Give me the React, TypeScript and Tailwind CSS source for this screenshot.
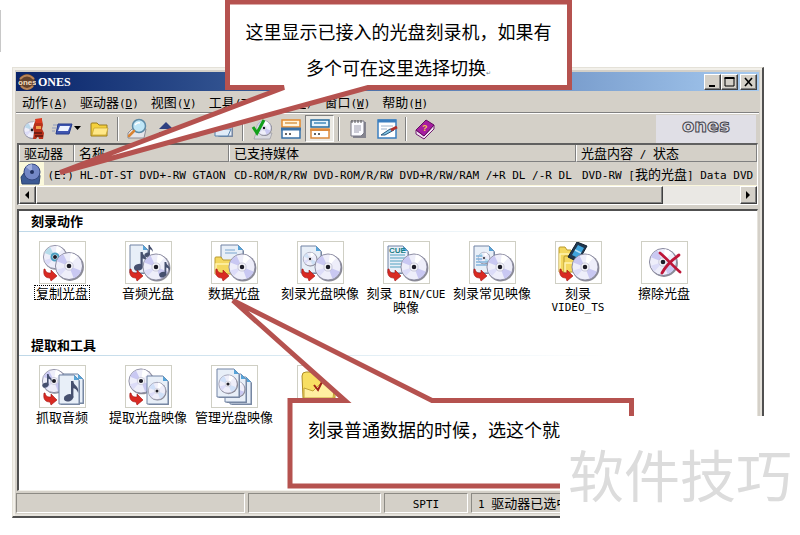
import { Fragment, type ReactNode } from 'react';

const menus = [
  { label: '动作', key: 'A' },
  { label: '驱动器', key: 'D' },
  { label: '视图', key: 'V' },
  { label: '工具', key: 'T' },
  { label: '选项', key: 'O' },
  { label: '窗口', key: 'W' },
  { label: '帮助', key: 'H' },
];

/* Latin runs use the narrow fixed-width face, Chinese runs the normal one */
function Mixed({ text }: { text: string }) {
  return (
    <>
      {text.split(/([\x20-\x7e]+)/).map((part, i) =>
        i % 2 ? (
          <span key={i} className="font-['DejaVu_Sans_Mono','Noto_Sans_CJK_SC',monospace] text-[11px] leading-none whitespace-pre">{part}</span>
        ) : (
          <Fragment key={i}>{part}</Fragment>
        )
      )}
    </>
  );
}

/* ---------- drawing parts ---------- */

function Disc({ x, y, r, tint = '#c9c8f2' }: { x: number; y: number; r: number; tint?: string }) {
  return (
    <g transform={`translate(${x} ${y}) scale(${r / 15})`}>
      <circle cx="1" cy="1" r="15" fill="#8b8b96" />
      <circle r="14.5" fill="#eeeefa" stroke="#83839a" strokeWidth="1" />
      <path d="M0 0L-13-5A14 14 0 0 1-6-12.500z" fill={tint} />
      <path d="M0 0L13 5A14 14 0 0 1 5 13z" fill={tint} />
      <path d="M0 0L-13 4A14 14 0 0 0-9 10z" fill="#dcdcf8" />
      <path d="M0 0L2-14A14 14 0 0 1 9-10z" fill="#fff" />
      <circle r="4.500" fill="#f5f5fb" stroke="#b9b9cc" strokeWidth=".8" />
      <circle r="2.500" fill="#1d1d28" />
    </g>
  );
}

function Page({ x, y, w = 20, h = 27 }: { x: number; y: number; w?: number; h?: number }) {
  return (
    <g transform={`translate(${x} ${y})`}>
      <path d={`M1.500 1.500H${w - 4}L${w + 1} 6V${h + 1}H1.500z`} fill="#7e8ba0" />
      <path d={`M0 0H${w - 5}L${w} 5V${h}H0z`} fill="#e8eff8" stroke="#7183a3" />
      <path d={`M${w - 5} 0V5H${w}z`} fill="#58a4d8" />
    </g>
  );
}

function Note({ x, y, s = 1 }: { x: number; y: number; s?: number }) {
  return (
    <g transform={`translate(${x} ${y}) scale(${s})`} fill="#46506f">
      <ellipse cx="3" cy="14" rx="4" ry="3" transform="rotate(-20 3 14)" />
      <path d="M5 14V0h2c0 4 5 4 4 10-1-3-3-4-4-4v8z" />
    </g>
  );
}

const RedArrow = () => (
  <path d="M5 27c1 4 3 4 6 4v-3l6 6-6 5-1-3c-5 0-7-3-6-9z" fill="#d92a22" stroke="#a11412" strokeWidth=".6" />
);

const Folder = ({ x, y, w = 20, h = 18 }: { x: number; y: number; w?: number; h?: number }) => (
  <g transform={`translate(${x} ${y})`}>
    <path d={`M0 1Q0 0 1 0H6L8 3H${w}V${h}H0z`} fill="#f4d860" stroke="#b99a2d" />
    <path d={`M1 ${h}V7H${w - 1}`} fill="none" stroke="#fff3b0" strokeWidth="1.500" />
  </g>
);

type Action = { name?: string; label: string[]; art: ReactNode };

const burnActions: Action[] = [
  { label: ['复制光盘'], art: <><Disc x={15} y={15} r={12} tint="#b6dcea" /><circle cx="15" cy="15" r="3.500" fill="none" stroke="#4b9fc0" strokeWidth="2" /><RedArrow /><Disc x={29} y={24} r={14} /></> },
  { label: ['音频光盘'], art: <><Page x={4} y={3} w={18} h={28} /><Note x={9} y={10} s={1.1} /><Note x={19} y={3} s={0.7} /><RedArrow /><Disc x={30} y={25} r={13.5} /><Note x={34} y={20} s={0.9} /></> },
  { label: ['数据光盘'], art: <><Page x={9} y={3} w={22} h={20} /><path d="M13 8h10M13 11h12" stroke="#7aa6cf" /><Folder x={3} y={15} w={22} h={17} /><RedArrow /><Disc x={30} y={25} r={13.5} /></> },
  { label: ['刻录光盘映像'], art: <><Page x={3} y={4} /><Disc x={12} y={17} r={7} tint="#cfe1f5" /><RedArrow /><Disc x={30} y={25} r={13.5} /></> },
  { label: ['刻录 BIN/CUE', '映像'], art: <><Page x={4} y={4} /><path d="M6 13h15M6 16h15M6 19h13M6 22h12M6 25h11" stroke="#82bcd2" strokeWidth="1.500" /><text x="5" y="11" fontFamily="Liberation Sans, sans-serif" fontWeight="bold" fontSize="8" fill="#167c83">CUE</text><RedArrow /><Disc x={30} y={25} r={13.5} /></> },
  { label: ['刻录常见映像'], art: <><Page x={4} y={4} /><Disc x={14} y={16} r={6} tint="#b7dff0" /><path d="M6 14h6M6 17h6M6 20h12M6 23h11" stroke="#82b4dc" strokeWidth="1.500" /><RedArrow /><Disc x={30} y={25} r={13.5} /></> },
  { label: ['刻录', 'VIDEO_TS'], art: <><Folder x={3} y={5} w={12} h={25} /><Folder x={8} y={14} w={28} h={16} /><path d="M21 0l10 4-9 16-10-5z" fill="#20374f" stroke="#12202f" /><path d="M22 3l6 3-6 10-6-3z" fill="#3fa4dc" /><path d="M19 8l6 3" stroke="#b9e4fa" strokeWidth="1.500" /><RedArrow /><Disc x={29} y={25} r={13.5} /></> },
  { label: ['擦除光盘'], art: <><Disc x={21} y={20} r={14} /><path d="M18 11c7 6 12 12 20 19M37 13c-7 5-13 10-17 18" fill="none" stroke="#bd1638" strokeWidth="2.800" strokeLinecap="round" /></> },
];

const toolActions: Action[] = [
  { label: ['抓取音频'], art: <><Disc x={14} y={15} r={12} /><Note x={3} y={8} s={0.8} /><RedArrow /><Page x={23} y={8} w={20} h={29} /><Page x={19} y={9} w={20} h={29} /><Note x={25} y={15} s={1.2} /></> },
  { label: ['提取光盘映像'], art: <><Disc x={15} y={15} r={12.5} /><RedArrow /><Page x={21} y={10} w={21} h={28} /><Disc x={31} y={25} r={9} tint="#d0e0f8" /></> },
  { label: ['管理光盘映像'], art: <><Page x={18} y={11} w={21} h={27} /><Page x={13} y={8} w={21} h={28} /><Disc x={25} y={23} r={8} /><Page x={5} y={3} w={22} h={28} /><Disc x={16} y={18} r={9.5} tint="#d0e0f8" /></> },
  { name: '选项', label: [], art: <><path d="M4 10q0-4 4-4h10l5 4h14v22H5z" fill="#f8df63" stroke="#ad8d28" /><path d="M6 32V22l9 3 8-8h14l-2 15z" fill="#fff0a1" stroke="#c2a338" /><path d="M16 19l4 5 6-12" fill="none" stroke="#a02018" strokeWidth="2" /></> },
];

const bar = {
  burner: <><Disc x={9} y={12} r={8.5} tint="#bcd8ea" /><path d="M11 6l2-4h6l1 5-1 4 2 4-1 6h-4l-1-3-2 3h-3l1-7-1-4z" fill="#b8311a" /><path d="M13 8h5v3h-5z" fill="#f0a04e" /><path d="M12 1l1 4h6V0z" fill="#dc3a20" /><path d="M11 15h8M12 18h8" stroke="#5c1710" strokeWidth="1.500" /></>,
  drive: <><path d="M6 6h14l-3 10H4z" fill="#3e55b0" stroke="#263c8c" /><path d="M8 8h10l-2 5H6z" fill="#eef3ff" /><path d="M1 7h4M0 10h4M0 13h3" stroke="#8f9cc0" /></>,
  folder: <><path d="M3 6q0-1 1-1h5l2 2h8v11H3z" fill="#f4d03d" stroke="#9a7d1e" /><path d="M4 17L6 10h14l-2 7z" fill="#ffe888" stroke="#c3a02f" strokeWidth=".7" /></>,
  search: <><path d="M2 15l4-4h14l-2 9H2z" fill="#e5e5ea" stroke="#8c8c96" /><circle cx="13" cy="8" r="6.500" fill="#bfe6f7" stroke="#5c8aa6" strokeWidth="1.500" /><path d="M9 7q2-3 5-2" stroke="#fff" strokeWidth="1.500" fill="none" /><path d="M8 13l-5 5" stroke="#d88434" strokeWidth="2.500" strokeLinecap="round" /></>,
  eject: <><path d="M11 4l7 7H4z" fill="#2d3f80" /><path d="M4 14h14v3H4z" fill="#2d3f80" /></>,
  disc: <Disc x={11} y={11} r={8} />,
  image: <><Page x={5} y={4} w={14} h={14} /><path d="M2 14l4-3h12l-3 7H2z" fill="#dfebf8" stroke="#5781ab" /></>,
  verify: <><path d="M5 15h16l-2 6H3z" fill="#dadae0" stroke="#9a9aa2" strokeWidth=".7" /><Disc x={13} y={10} r={7.5} /><path d="M2 9l4 6 7-13" fill="none" stroke="#12a01a" strokeWidth="3" /></>,
  layoutA: <><path d="M2 2h18v7H2z" fill="#fff4dc" stroke="#e2892e" strokeWidth="1.500" /><path d="M5 5h12" stroke="#e2b070" strokeWidth="2" /><path d="M2 11h18v9H2z" fill="#fff" stroke="#3971a8" strokeWidth="1.500" /><path d="M1 11h20" stroke="#3971a8" strokeWidth="3" /><path d="M5 16h2M9 16h2" stroke="#333" strokeWidth="1.500" /></>,
  layoutB: <><path d="M2 11h18v9H2z" fill="#fff" stroke="#dd8a3d" strokeWidth="1.500" /><path d="M2 2h18v7H2z" fill="#e4f3fc" stroke="#246b9d" strokeWidth="1.500" /><path d="M5 5h12" stroke="#69a4cc" strokeWidth="2" /><path d="M1 12h20" stroke="#dd8a3d" strokeWidth="2" /><path d="M5 16h2M9 16h2" stroke="#333" strokeWidth="1.500" /></>,
  notes: <><path d="M6 4h13v16H6z" fill="#85858f" /><path d="M4 3h13v12l-3 3H4z" fill="#fbfbff" stroke="#777785" /><path d="M5 2v3M8 2v3M11 2v3M14 2v3" stroke="#555" /><path d="M7 8h7M7 10h7M7 12h7M7 14h5" stroke="#9a9aac" /></>,
  edit: <><path d="M2 2h18v18H2z" fill="#fff" stroke="#3b7fc0" strokeWidth="1.500" /><path d="M2 3h18" stroke="#3b7fc0" strokeWidth="3" /><path d="M5 8h12M5 11h6" stroke="#9fb5ce" /><path d="M5 17l9-6 4 1-9 5z" fill="#84c5e6" stroke="#28597e" /><path d="M15 12l6-3" stroke="#b0302c" strokeWidth="3" /></>,
  help: <><path d="M2 12v4l8 5 10-10V7L10 18z" fill="#f2e2f2" stroke="#701c70" /><path d="M2 12L12 2l8 5-10 11z" fill="#a71da0" stroke="#611060" /><text x="8" y="13" fontFamily="Liberation Sans, sans-serif" fontWeight="bold" fontSize="9" fill="#f4c64d">?</text></>,
};

function BarButton({ label, art, pressed, menu }: { label: string; art: ReactNode; pressed?: boolean; menu?: boolean }) {
  return (
    <button
      type="button"
      aria-label={label}
      className={`flex h-[27px] shrink-0 items-center justify-center ${menu ? 'w-9' : 'w-[29px]'} ${pressed ? 'border border-[#808080] border-r-white border-b-white bg-[#ebe9e4]' : ''}`}
    >
      <svg width="22" height="22" viewBox="0 0 22 22">{art}</svg>
      {menu && <svg width="7" height="5" viewBox="0 0 7 5"><path d="M0 0h7L3.500 4z" /></svg>}
    </button>
  );
}

const BarSeparator = () => (
  <div className="flex w-[9px] shrink-0 justify-center">
    <div className="h-6 w-[2px] border-l border-[#808080] bg-white" />
  </div>
);

function ActionGroup({ title, items, focused }: { title: string; items: Action[]; focused?: number }) {
  return (
    <section>
      <h2 className="pl-3 text-[13px] leading-[19px] font-bold">{title}</h2>
      <div className="mt-px h-px w-4/5 bg-gradient-to-r from-[#bfd8e8] via-[#dcebf3] to-transparent" />
      <div className="flex flex-wrap pt-[9px]">
        {items.map((item, i) => (
          <button key={i} type="button" aria-label={item.name} className="flex w-[86px] flex-col items-center">
            <span className="border border-[#cfcfc4] bg-white">
              <svg width="45" height="41" viewBox="0 0 45 41">{item.art}</svg>
            </span>
            {item.label.length > 0 && (
              <span className={`mt-px border border-dotted px-px leading-[13px] whitespace-nowrap ${i === focused ? 'border-black' : 'border-transparent'}`}>
                {item.label.map((line) => (
                  <span key={line} className="block"><Mixed text={line} /></span>
                ))}
              </span>
            )}
          </button>
        ))}
      </div>
    </section>
  );
}

const raised = 'border border-white border-r-[#404040] border-b-[#404040] bg-[#d4d0c8] shadow-[inset_-1px_-1px_0_#808080]';
const th = 'border-r border-b border-l border-[#808080] border-l-white py-0 pr-0 pl-[4px] text-left font-normal';
const td = 'border-b border-[#fbf7dc] py-0 pr-0';

export default function App() {
  return (
    <div className="relative min-h-screen overflow-hidden bg-white pt-[67px] pb-4 pl-3 pr-9 font-['Noto_Sans_CJK_SC',sans-serif] text-[13px] text-black">
      <div className="absolute top-[10px] left-0 h-[42px] w-px bg-[#c8c8c8]" />

      <main className="border border-[#e4e1d8] border-r-2 border-b-2 border-r-[#505050] border-b-[#505050] bg-[#d4d0c8] pt-px shadow-[inset_2px_2px_0_#f2f0ea,inset_-2px_-2px_0_#e6e3dc]">
        <div className="p-[3px]">
          {/* Title bar */}
          <header className="flex h-[19px] items-center bg-gradient-to-r from-[#0a246a] to-[#a6caf0] px-[2px] text-white">
            <svg width="18" height="18" viewBox="0 0 18 18">
              <circle cx="9" cy="9" r="8" fill="#63422d" />
              <path d="M2 6q7-7 14 0M3 13q6 6 12 0" stroke="#b98458" strokeWidth="2" fill="none" />
              <text x="0" y="12" fontFamily="Liberation Sans, sans-serif" fontWeight="bold" fontSize="8" fill="#f6dfc0">ones</text>
            </svg>
            <h1 className="ml-[2px] flex-1 font-['Liberation_Serif',serif] text-[12px] font-bold">ONES</h1>
            <button type="button" aria-label="最小化" className={`h-4 w-[17px] ${raised}`}>
              <svg width="14" height="14" viewBox="0 0 14 14"><path d="M4 10h6v2H4z" /></svg>
            </button>
            <button type="button" aria-label="最大化" className={`h-4 w-[17px] ${raised}`}>
              <svg width="14" height="14" viewBox="0 0 14 14"><path d="M3 3h9v8H3z" fill="none" stroke="#000" /><path d="M2.500 2h10v2h-10z" /></svg>
            </button>
            <button type="button" aria-label="关闭" className={`ml-[2px] h-4 w-[17px] ${raised}`}>
              <svg width="14" height="14" viewBox="0 0 14 14"><path d="M4 3l7 8M11 3l-7 8" stroke="#000" strokeWidth="1.600" /></svg>
            </button>
          </header>

          {/* Menu */}
          <nav className="flex h-[22px] items-center gap-3 border-b border-[#808080] pl-[6px]">
            {menus.map((m) => (
              <button key={m.key} type="button" className="leading-[18px] whitespace-nowrap">
                {m.label}
                <span className="font-['DejaVu_Sans_Mono',monospace] text-[11px] leading-none">(<u>{m.key}</u>)</span>
              </button>
            ))}
          </nav>

          {/* Toolbar */}
          <div className="flex h-[30px] items-center border-t border-white pl-[3px]">
            <BarButton label="刻录" art={bar.burner} />
            <BarButton label="驱动器" art={bar.drive} menu />
            <BarButton label="打开" art={bar.folder} />
            <BarSeparator />
            <BarButton label="查看" art={bar.search} />
            <BarButton label="弹出" art={bar.eject} />
            <BarButton label="光盘" art={bar.disc} />
            <BarButton label="映像" art={bar.image} />
            <BarSeparator />
            <BarButton label="校验" art={bar.verify} />
            <BarButton label="布局一" art={bar.layoutA} />
            <BarButton label="布局二" art={bar.layoutB} pressed />
            <BarSeparator />
            <BarButton label="日志" art={bar.notes} />
            <BarButton label="编辑" art={bar.edit} />
            <BarSeparator />
            <BarButton label="帮助" art={bar.help} />
            <div className="mr-[3px] ml-auto flex h-[28px] w-[100px] items-center justify-center bg-[#e0dfe6] pb-[6px] font-['DejaVu_Sans',sans-serif] text-[18px] leading-[20px] font-bold text-[#e0dfe6] [-webkit-text-stroke:1px_#44444c]">
              ones
            </div>
          </div>

          {/* Drive list */}
          <div className="mx-px overflow-hidden border-t-2 border-l-2 border-[#606060] border-r border-b border-r-white border-b-white">
            <table className="w-full table-fixed border-separate border-spacing-0 whitespace-nowrap">
              <thead>
                <tr className="h-[17px] leading-[16px]">
                  <th className={`${th} w-[55px]`}>驱动器</th>
                  <th className={`${th} w-[155px]`}>名称</th>
                  <th className={`${th} w-[347px]`}>已支持媒体</th>
                  <th className={th}><Mixed text="光盘内容 / 状态" /></th>
                </tr>
              </thead>
              <tbody>
                <tr className="h-6 leading-[18px]">
                  <td className={`${td} pl-0`}>
                    <div className="flex items-center">
                      <span className="flex h-[23px] w-[25px] items-center justify-center bg-[#fbf9dc]">
                        <svg width="22" height="22" viewBox="0 0 22 22">
                          <path d="M1 14l3-4h15l1 3-1 8H2z" fill="#3c5a94" stroke="#2b4270" />
                          <circle cx="12" cy="9" r="8" fill="#7488c6" stroke="#34467e" />
                          <path d="M12 9L6 4q3-3 6-3z" fill="#a1b0e0" />
                          <circle cx="12" cy="9" r="2" fill="#20305e" />
                        </svg>
                      </span>
                      <span className="pl-[4px]"><Mixed text="(E:)" /></span>
                    </div>
                  </td>
                  <td className={`${td} pl-[6px]`}><Mixed text="HL-DT-ST DVD+-RW GTAON" /></td>
                  <td className={`${td} pl-[5px]`}><Mixed text="CD-ROM/R/RW DVD-ROM/R/RW DVD+R/RW/RAM /+R DL /-R DL" /></td>
                  <td className={`${td} pl-[6px]`}><Mixed text="DVD-RW [我的光盘] Data DVD" /></td>
                </tr>
              </tbody>
            </table>
            <div className="flex h-[18px] bg-[#eae8e4]">
              <button type="button" aria-label="向左滚动" className={`w-[17px] ${raised}`}>
                <svg width="14" height="14" viewBox="0 0 14 14"><path d="M9 3v8L5 7z" /></svg>
              </button>
              <div className="flex-1">
                <div className={`h-full w-[89%] ${raised}`} />
              </div>
              <button type="button" aria-label="向右滚动" className={`w-[17px] ${raised}`}>
                <svg width="14" height="14" viewBox="0 0 14 14"><path d="M5 3v8l4-4z" /></svg>
              </button>
            </div>
          </div>

          {/* Actions */}
          <div className="mx-px mt-1 min-h-[282px] border-t-2 border-l-2 border-[#505050] border-r border-b border-r-[#e6e3dc] border-b-[#f2f0ea] bg-white">
            <div className="flex flex-col gap-[21px]">
              <ActionGroup title="刻录动作" items={burnActions} focused={0} />
              <ActionGroup title="提取和工具" items={toolActions} />
            </div>
          </div>

          {/* Status bar */}
          <footer className="mt-[2px] flex h-5 gap-[3px] leading-[18px] *:border *:border-[#8c8a84] *:border-r-white *:border-b-white">
            <div className="w-[229px]" />
            <div className="w-[133px]" />
            <div className="w-[84px] text-center"><Mixed text="SPTI" /></div>
            <div className="flex-1 pl-[6px]"><Mixed text="1 驱动器已选中" /></div>
          </footer>
        </div>
      </main>

      {/* Callout balloons */}
      <svg className="pointer-events-none absolute top-0 left-0" width="800" height="535" viewBox="0 0 800 535">
        <g fill="#fff" stroke="#b5524f" strokeWidth="5">
          <path d="M227.500 2H569.500V87.500H368L60 172.500L284 87.500H227.500z" />
          <path d="M290 400.500H345L233 300.500L432 400.500H631.500V486H290z" />
        </g>
      </svg>
      <p className="absolute top-[13px] left-[227px] w-[343px] text-center text-[18px] leading-[36px]">
        这里显示已接入的光盘刻录机，如果有
        <br />
        多个可在这里选择切换<span className="text-[6px] text-gray-500">↵</span>
      </p>
      <p className="absolute top-[411px] left-[308px] text-[18px] leading-[36px]">刻录普通数据的时候，选这个就</p>

      {/* Watermark */}
      <div className="absolute top-[416px] right-0 bottom-0 left-[560px] bg-white pt-[25px] pl-2 text-[56px] leading-[64px] whitespace-nowrap text-[#dcdcdc]">
        软件技巧
      </div>
    </div>
  );
}
